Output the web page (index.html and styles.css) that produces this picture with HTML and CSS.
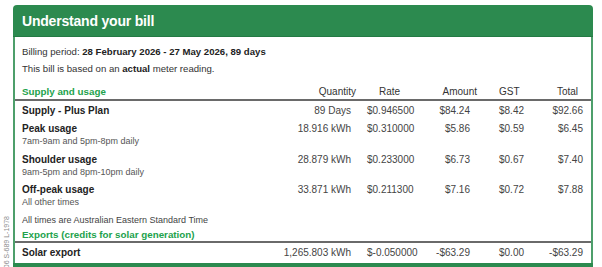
FILE: index.html
```html
<!DOCTYPE html>
<html lang="en">
<head>
<meta charset="utf-8">
<title>Understand your bill</title>
<link rel="stylesheet" href="styles.css">
</head>
<body>
<div class="side-code">106 S-689 L-1978</div>
<section class="card">
  <div class="card-head"><h1>Understand your bill</h1></div>
  <div class="card-body">
    <p class="meta">Billing period: <b>28 February 2026 - 27 May 2026, 89 days</b></p>
    <p class="meta meta-last">This bill is based on an <b>actual</b> meter reading.</p>

    <div class="row row-head">
      <span class="sec">Supply and usage</span>
      <span class="qty h">Quantity</span>
      <span class="rate h">Rate</span>
      <span class="amt h">Amount</span>
      <span class="gst h">GST</span>
      <span class="tot h">Total</span>
    </div>

    <div class="row row-item row-first">
      <span class="label"><b>Supply - Plus Plan</b></span>
      <span class="qty">89 Days</span>
      <span class="rate">$0.946500</span>
      <span class="amt">$84.24</span>
      <span class="gst">$8.42</span>
      <span class="tot">$92.66</span>
    </div>

    <div class="row row-item">
      <span class="label"><b>Peak usage</b><span class="sub">7am-9am and 5pm-8pm daily</span></span>
      <span class="qty">18.916 kWh</span>
      <span class="rate">$0.310000</span>
      <span class="amt">$5.86</span>
      <span class="gst">$0.59</span>
      <span class="tot">$6.45</span>
    </div>

    <div class="row row-item">
      <span class="label"><b>Shoulder usage</b><span class="sub">9am-5pm and 8pm-10pm daily</span></span>
      <span class="qty">28.879 kWh</span>
      <span class="rate">$0.233000</span>
      <span class="amt">$6.73</span>
      <span class="gst">$0.67</span>
      <span class="tot">$7.40</span>
    </div>

    <div class="row row-item">
      <span class="label"><b>Off-peak usage</b><span class="sub">All other times</span></span>
      <span class="qty">33.871 kWh</span>
      <span class="rate">$0.211300</span>
      <span class="amt">$7.16</span>
      <span class="gst">$0.72</span>
      <span class="tot">$7.88</span>
    </div>

    <p class="note">All times are Australian Eastern Standard Time</p>

    <div class="row row-head row-head-export">
      <span class="sec sec-wide">Exports (credits for solar generation)</span>
    </div>

    <div class="row row-item row-last">
      <span class="label"><b>Solar export</b></span>
      <span class="qty">1,265.803 kWh</span>
      <span class="rate">$-0.050000</span>
      <span class="amt">-$63.29</span>
      <span class="gst">$0.00</span>
      <span class="tot">-$63.29</span>
    </div>
  </div>
</section>
<div class="next-card"></div>
</body>
</html>
```

FILE: styles.css
```css
html, body {
  margin: 0;
  overflow: hidden;
  background: #ffffff;
}

body {
  position: relative;
  box-sizing: border-box;
  height: 267px;
  padding: 5px 9px 0 13px;
  font-family: "Liberation Sans", Arial, sans-serif;
  font-size: 10px;
  color: #333333;
}

.side-code {
  position: absolute;
  left: 3px;
  top: 216px;
  writing-mode: vertical-rl;
  transform: rotate(180deg);
  font-size: 7px;
  line-height: 7px;
  color: #8a8a8a;
  white-space: nowrap;
}

.card-head {
  box-sizing: border-box;
  height: 32px;
  padding: 7px 9px 0;
  background: #2c8a4f;
  border-radius: 4px 4px 0 0;
  border-bottom: 1px solid #247a44;
}

.card-head h1 {
  margin: 0;
  font-size: 14px;
  line-height: 18px;
  font-weight: bold;
  color: #ffffff;
  letter-spacing: -0.2px;
}

.card-body {
  padding-top: 8px;
  border-left: 2px solid #4d9f6b;
  border-right: 2px solid #4d9f6b;
}

.meta {
  margin: 0 0 4px;
  padding: 0 8px 0 7px;
  font-size: 9.6px;
  line-height: 13px;
  color: #333333;
}

.meta b {
  color: #222222;
}

.meta-last {
  margin-bottom: 10px;
}

.row {
  display: grid;
  grid-template-columns: 254px 80px 74px 47px 53px 53px;
  padding: 0 8px 0 7px;
  line-height: 13px;
  white-space: nowrap;
}

.row-head {
  padding-bottom: 1px;
  border-bottom: 2px solid #6a6a6a;
}

.row-head-export {
  padding-bottom: 0;
}

.sec {
  font-weight: bold;
  font-size: 9.8px;
  color: #22a24c;
}

.sec-wide {
  grid-column: 1 / -1;
}

.h {
  color: #333333;
}

.row-item {
  padding-top: 2px;
  padding-bottom: 2.5px;
  color: #444444;
}

.row-first {
  padding-top: 2.5px;
  padding-bottom: 3.5px;
}

.row-last {
  padding-top: 3px;
  padding-bottom: 4px;
}

.label b {
  display: block;
  color: #222222;
}

.sub {
  display: block;
  font-size: 9px;
  color: #555555;
}

.qty {
  text-align: right;
  padding-right: 5px;
}

.qty.h {
  padding-right: 0;
}

.rate {
  padding-left: 11px;
}

.rate.h {
  padding-left: 23px;
}

.amt {
  text-align: right;
  padding-right: 7px;
}

.amt.h {
  padding-right: 0;
}

.gst {
  padding-left: 22px;
}

.tot {
  text-align: right;
}

.tot.h {
  padding-right: 5px;
}

.note {
  margin: 2.5px 0 1px;
  padding: 0 8px 0 7px;
  font-size: 9px;
  line-height: 13px;
  color: #444444;
}

.next-card {
  height: 10px;
  background: #2c8a4f;
}
```
